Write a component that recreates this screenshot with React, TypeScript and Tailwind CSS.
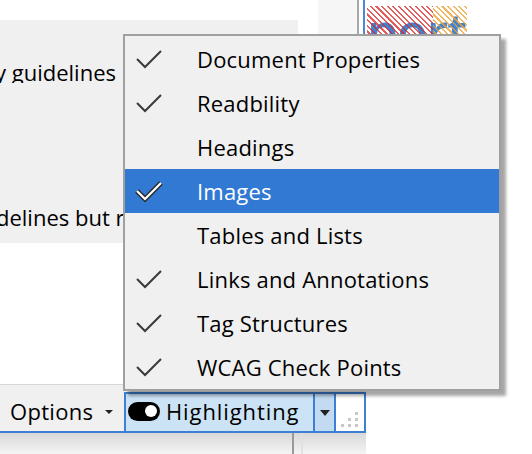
import React from "react";

const items = [
  { label: "Document Properties", checked: true },
  { label: "Readbility", checked: true },
  { label: "Headings", checked: false },
  { label: "Images", checked: true, active: true },
  { label: "Tables and Lists", checked: false },
  { label: "Links and Annotations", checked: true },
  { label: "Tag Structures", checked: true },
  { label: "WCAG Check Points", checked: true },
];

function Check({ active }: { active?: boolean }) {
  return (
    <svg width="30" height="22" viewBox="0 0 30 22" className="shrink-0">
      {active && (
        <polyline points="4,11 12,19 28,3" fill="none" stroke="#2a2a2a" strokeWidth="5" strokeLinejoin="miter" />
      )}
      <polyline
        points="4,11 12,19 28,3"
        fill="none"
        stroke={active ? "#ffffff" : "#3a3a3a"}
        strokeWidth={active ? 2.2 : 2}
      />
    </svg>
  );
}

function Menu() {
  return (
    <div className="absolute left-[123px] top-[34px] w-[378px] border-2 border-[#a0a0a0] bg-[#f0f0f0] pt-[1px] shadow-[5px_5px_3px_rgba(0,0,0,0.35)]">
      {items.map((it) => (
        <div
          key={it.label}
          className={
            "flex h-[44px] items-center " + (it.active ? "bg-[#3179d3] text-white" : "text-black")
          }
        >
          <div className="flex w-[72px] pl-[8px]">{it.checked && <Check active={it.active} />}</div>
          <span className="whitespace-nowrap tracking-[0.2px]">{it.label}</span>
        </div>
      ))}
    </div>
  );
}

function Toolbar() {
  return (
    <div className="flex h-[49px] w-[366px] flex-col border-t border-[#d6d6d6] bg-[#f0f0f0]">
      <div className="flex flex-1 items-end border-b-2 border-[#3c7fd3]">
        <div className="flex h-full w-[124px] items-center pl-[10px] pt-[5px]">
          <span className="w-[95px] text-black tracking-[0.3px]">Options</span>
          <span className="mt-[2px] border-x-[4px] border-t-[4px] border-x-transparent border-t-[#222]" />
        </div>
        <div className="flex h-[39px] border-x-2 border-t-2 border-[#3c7fd3]">
          <div className="flex w-[187px] items-center bg-[#cce3f6] pb-[3px] pl-[2px]">
            <div className="flex h-[19px] w-[32px] items-center justify-end rounded-full bg-black pr-[3px]">
              <div className="h-[12px] w-[12px] rounded-full bg-white" />
            </div>
            <span className="ml-[6px] text-black tracking-[0.9px]">Highlighting</span>
          </div>
          <div className="flex w-[23px] items-center justify-center border-x-2 border-[#3c7fd3] bg-[#c2dbf3]">
            <span className="border-x-[5px] border-t-[6px] border-x-transparent border-t-[#222]" />
          </div>
          <div className="grid w-[28px] grid-cols-3 content-end gap-[3px] bg-white px-[5px] pb-[4px]">
            <span />
            <span />
            <span className="h-[3px] w-[3px] bg-[#c8c8c8]" />
            <span />
            <span className="h-[3px] w-[3px] bg-[#c8c8c8]" />
            <span className="h-[3px] w-[3px] bg-[#c8c8c8]" />
            <span className="h-[3px] w-[3px] bg-[#c8c8c8]" />
            <span className="h-[3px] w-[3px] bg-[#c8c8c8]" />
            <span className="h-[3px] w-[3px] bg-[#c8c8c8]" />
          </div>
        </div>
      </div>
    </div>
  );
}

export default function App() {
  return (
    <div className="relative h-[454px] w-[532px] overflow-hidden bg-white font-['Open_Sans',sans-serif] text-[22px] leading-none">
      <div className="flex h-[384px]">
        <div className="flex w-[298px] flex-col">
          <div className="h-[20px] bg-white" />
          <div className="flex h-[223px] flex-col bg-[#f0f0f0]">
            <div className="mt-[41px] flex w-[116px] justify-end overflow-hidden whitespace-nowrap text-black">
              Passed accessibility guidelines
            </div>
            <div className="mt-[123px] overflow-hidden whitespace-nowrap text-black">
              <span className="-ml-[35px]">guidelines but requires manual check</span>
            </div>
          </div>
        </div>
        <div className="w-[20px] bg-white" />
        <div className="w-[39px] bg-[#f6f6f6]" />
        <div className="w-[2px] bg-[#a8a8a8]" />
        <div className="w-[4px] bg-white" />
        <div className="w-[2px] bg-[#4f88d2]" />
        <div className="flex-1 bg-white pl-[2px] pt-[6px]">
          <div className="relative h-[60px] w-[100px] overflow-hidden">
            <span className="block text-[50px] font-semibold leading-none tracking-[-1px] text-[#3f84d4]">port</span>
            <div className="absolute inset-y-0 left-0 w-[66px] bg-[repeating-linear-gradient(45deg,rgba(220,40,40,0.75)_0_1.5px,transparent_1.5px_4px)]" />
            <div className="absolute inset-y-0 left-[66px] w-[34px] bg-[repeating-linear-gradient(45deg,rgba(235,160,50,0.75)_0_1.5px,transparent_1.5px_4px)]" />
          </div>
        </div>
      </div>
      <div className="flex">
        <Toolbar />
        <div className="flex-1 bg-white" />
      </div>
      <div className="flex h-[21px]">
        <div className="relative w-[366px] bg-[linear-gradient(#d8d8d8,#f4f4f4)]">
          <div className="absolute left-[292px] top-0 h-full w-[2px] bg-[#9a9a9a]" />
          <div className="absolute left-[301px] top-0 h-full w-[2px] bg-[#e0e0e0]" />
        </div>
        <div className="flex-1 bg-white" />
      </div>
      <Menu />
    </div>
  );
}
